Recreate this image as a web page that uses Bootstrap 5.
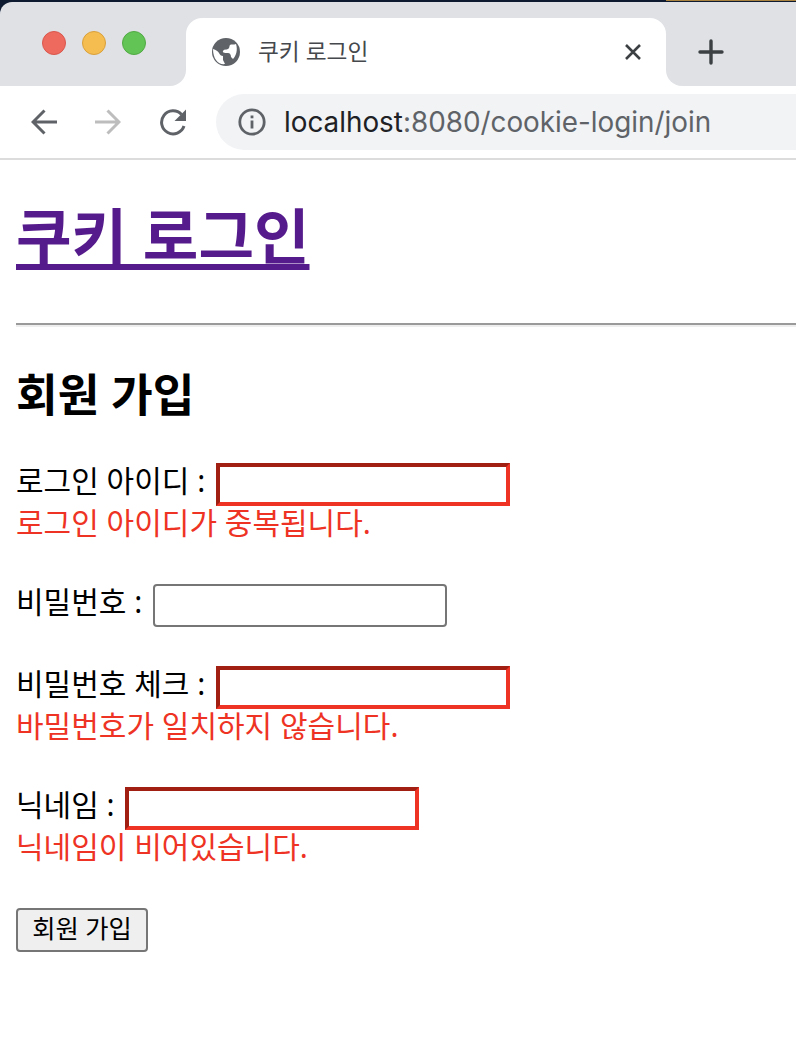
<!doctype html>
<html lang="ko">
<head>
<meta charset="utf-8">
<link href="https://cdn.jsdelivr.net/npm/bootstrap@5.3.0/dist/css/bootstrap.min.css" rel="stylesheet">
<style>
html,body{background:#fff;overflow:hidden;height:1064px}
body{font-family:"Noto Sans","Noto Sans CJK KR",sans-serif;color:#000;font-size:30px}
.win-top{background:#0d1a30}
.win-line{height:2px}
.win-line-end{width:130px;height:1px;background:#a9823f}
.tab-strip{background:#dfe1e5;height:16px;border-top-left-radius:12px}
.tab-row{height:68px;background:#fff}
.tab-left{width:186px;background:#dfe1e5;border-bottom-right-radius:16px}
.traffic{padding:13px 0 0 42px;gap:16px}
.dot{width:24px;height:24px;border-radius:50%;border:1px solid}
.dot-r{background:#ee6a5f;border-color:#d9574d}
.dot-y{background:#f5bd4f;border-color:#d9a03c}
.dot-g{background:#61c454;border-color:#52a944}
.tab-wrap{width:480px;background:#dfe1e5}
.tab-face{height:100%;background:#fff;border-radius:16px 16px 0 0;padding:0 24px 0 26px}
.tab-title{font-size:22.7px;color:#45484c;margin-left:18px;line-height:1;white-space:nowrap}
.tab-right{background:#dfe1e5;border-bottom-left-radius:16px;padding-left:32px}
.toolbar{height:72px;background:#fff;border-bottom:2px solid #dcdcdc;box-sizing:content-box;padding-left:31px}
.tool-icons{gap:38px;width:185px}
.omni{height:56px;background:#f1f3f5;border-radius:28px 0 0 28px;padding-left:22px}
.url{font-family:Inter,"Liberation Sans",sans-serif;font-size:27.83px;color:#5f6368;margin-left:18px;padding-top:2px;white-space:nowrap;line-height:1}
.url b{font-weight:400;color:#202124}
.page{padding:0 0 0 16px}
.title-h{font-size:60.4px;font-weight:700;line-height:1;margin:0;padding-top:46px;height:163px}
.title-h a{color:#551a8b;text-decoration-thickness:6px;text-underline-offset:5px;text-decoration-skip-ink:none}
.rule{height:4px;border-top:2px solid #9a9a9a;border-bottom:2px solid #eee;opacity:1;margin:0;background:none}
.sub-h{font-size:45.3px;font-weight:700;line-height:1;margin:0;padding-top:45px;height:136px}
.field{margin-bottom:39px}
.field-last{margin-bottom:35px}
.field-row{height:43px;white-space:nowrap}
.field-row label{padding-bottom:8px;line-height:1.2}
.field-gap{margin-left:10.7px}
.box{width:294px;height:43px;flex:none;background:#fff;padding:0;outline:0}
.box-plain{border:2px solid #767676;border-radius:4px}
.box-bad{border-style:solid;border-width:4px;border-color:#a01f12 #ee3324 #ee3324 #a01f12;border-radius:0}
.err{color:#ee3324;height:39px;line-height:33px}
.btn-join{width:132px;height:44px;background:#efefef;border:2px solid #767676;border-radius:4px;font-size:25.3px;line-height:1;padding:0 0 3px;color:#000}
</style>
</head>
<body>
<header class="win-top">
  <div class="win-line d-flex justify-content-end"><div class="win-line-end"></div></div>
  <div class="tab-strip"></div>
  <div class="tab-row d-flex">
    <div class="tab-left d-flex traffic">
      <span class="dot dot-r"></span><span class="dot dot-y"></span><span class="dot dot-g"></span>
    </div>
    <div class="tab-wrap">
      <div class="tab-face d-flex align-items-center">
        <svg width="28" height="28" viewBox="0 0 28 28"><circle cx="14" cy="14" r="14" fill="#5f6368"/><path d="M1 11c3 1 5 2 6 4s2 3 4 3v4l2 4c-6 1-12-4-12-15zM24 6c-2 1-5 0-6 1s0 3-2 4-4 0-5 2 3 2 5 2 3 2 3 4l2 2c3-3 5-9 3-15z" fill="#fff"/></svg>
        <span class="tab-title flex-grow-1">쿠키 로그인</span>
        <svg width="18" height="18" viewBox="0 0 18 18"><path d="M2 2l14 14M16 2L2 16" stroke="#3c4043" stroke-width="2.6" fill="none"/></svg>
      </div>
    </div>
    <div class="tab-right flex-grow-1 d-flex align-items-center">
      <svg width="26" height="26" viewBox="0 0 26 26"><path d="M13 2v22M2 13h22" stroke="#3c4043" stroke-width="3.4" stroke-linecap="round" fill="none"/></svg>
    </div>
  </div>
</header>
<div class="toolbar d-flex align-items-center">
  <div class="tool-icons d-flex align-items-center">
    <svg width="26" height="26" viewBox="0 0 26 26"><path d="M26 13H3M13.5 1.5L2 13l11.5 11.5" stroke="#5f6368" stroke-width="3" fill="none"/></svg>
    <svg width="26" height="26" viewBox="0 0 26 26"><path d="M0 13h23M12.500 1.500L24 13 12.500 24.500" stroke="#bdbdbd" stroke-width="3" fill="none"/></svg>
    <svg width="28" height="28" viewBox="0 0 28 28"><path d="M25 18A11.500 11.500 0 1 1 22.500 6.500" stroke="#5f6368" stroke-width="3" fill="none"/><path d="M27 1.500v11.500H15.500z" fill="#5f6368"/></svg>
  </div>
  <div class="omni flex-grow-1 d-flex align-items-center">
    <svg width="28" height="28" viewBox="0 0 28 28"><circle cx="14" cy="14" r="12.200" stroke="#5f6368" stroke-width="2.800" fill="none"/><rect x="12.600" y="12.500" width="2.800" height="8" fill="#5f6368"/><rect x="12.600" y="7.500" width="2.800" height="2.800" fill="#5f6368"/></svg>
    <span class="url"><b>localhost</b>:8080/cookie-login/join</span>
  </div>
</div>
<main class="page">
  <h1 class="title-h"><a href="#">쿠키 로그인</a></h1>
  <hr class="rule">
  <h2 class="sub-h">회원 가입</h2>
  <form>
    <div class="field">
      <div class="field-row d-flex align-items-center"><label>로그인 아이디 :</label><input class="box box-bad field-gap" type="text"></div>
      <div class="err">로그인 아이디가 중복됩니다.</div>
    </div>
    <div class="field">
      <div class="field-row d-flex align-items-center"><label>비밀번호 :</label><input class="box box-plain field-gap" type="password"></div>
    </div>
    <div class="field">
      <div class="field-row d-flex align-items-center"><label>비밀번호 체크 :</label><input class="box box-bad field-gap" type="password"></div>
      <div class="err">바밀번호가 일치하지 않습니다.</div>
    </div>
    <div class="field field-last">
      <div class="field-row d-flex align-items-center"><label>닉네임 :</label><input class="box box-bad field-gap" type="text"></div>
      <div class="err">닉네임이 비어있습니다.</div>
    </div>
    <button class="btn-join" type="button">회원 가입</button>
  </form>
</main>
<script src="https://cdn.jsdelivr.net/npm/bootstrap@5.3.0/dist/js/bootstrap.bundle.min.js"></script>
</body>
</html>
